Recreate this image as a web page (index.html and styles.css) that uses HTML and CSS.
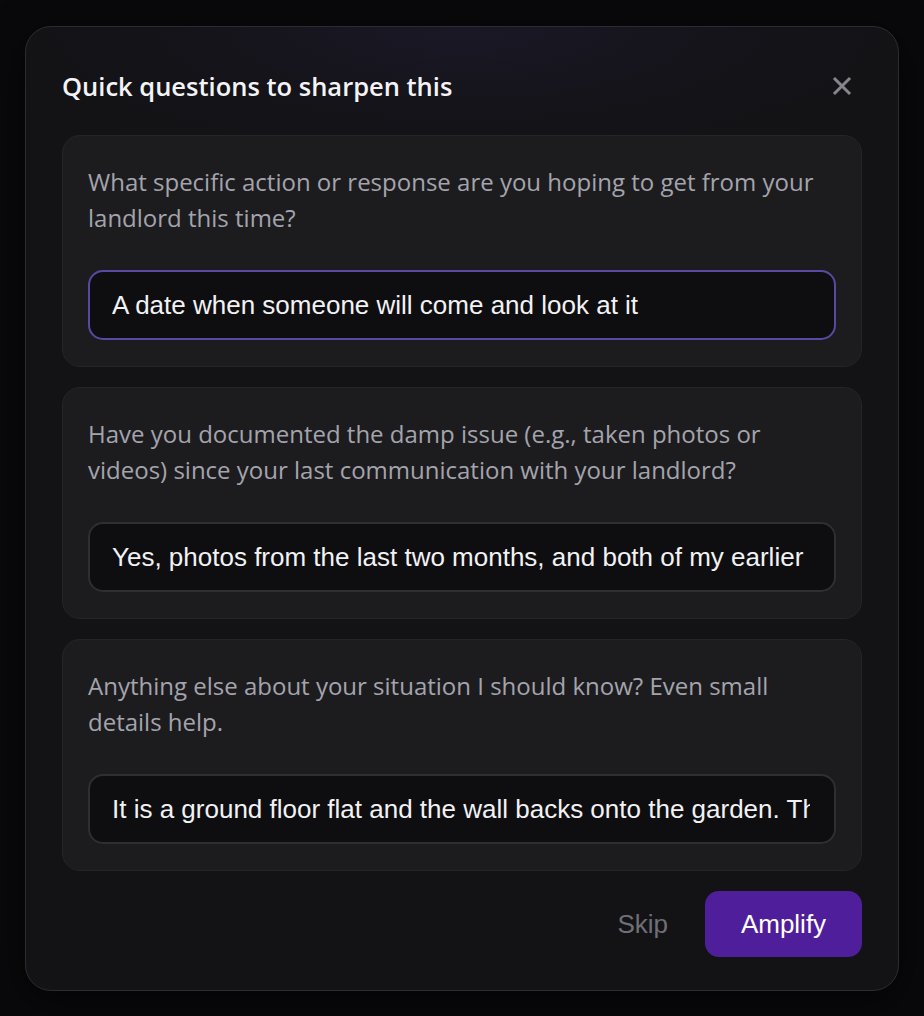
FILE: index.html
```html
<!DOCTYPE html>
<html>
<head>
<meta charset="utf-8">
<link rel="stylesheet" href="styles.css">
</head>
<body>
<div class="modal">
  <div class="header">
    <h2 class="title">Quick questions to sharpen this</h2>
    <button class="close" aria-label="Close">
      <svg width="20" height="20" viewBox="0 0 20 20"><path d="M3 3 L17 17 M17 3 L3 17" stroke="#85858e" stroke-width="3" stroke-linecap="square" fill="none"/></svg>
    </button>
  </div>
  <div class="cards">
    <div class="card">
      <p class="question">What specific action or response are you hoping to get from your landlord this time?</p>
      <div class="input focused"><div class="value">A date when someone will come and look at it</div></div>
    </div>
    <div class="card">
      <p class="question">Have you documented the damp issue (e.g., taken photos or videos) since your last communication with your landlord?</p>
      <div class="input"><div class="value">Yes, photos from the last two months, and both of my earlier emails are saved</div></div>
    </div>
    <div class="card">
      <p class="question">Anything else about your situation I should know? Even small details help.</p>
      <div class="input"><div class="value">It is a ground floor flat and the wall backs onto the garden. There is a gutter above it</div></div>
    </div>
  </div>
  <div class="footer">
    <button class="skip">Skip</button>
    <button class="amplify">Amplify</button>
  </div>
</div>
</body>
</html>
```
FILE: styles.css
```css
html, body {
  margin: 0;
  padding: 0;
  background: #09090b;
  width: 924px;
  height: 1016px;
  overflow: hidden;
}
body {
  padding: 26px 25px 0 25px;
  box-sizing: border-box;
}
.modal {
  width: 874px;
  height: 965px;
  box-sizing: border-box;
  border: 1px solid #2c2c30;
  border-radius: 26px;
  background: radial-gradient(ellipse 520px 160px at 50% 0%, #1a1826 0%, #141318 60%, #131315 100%), #131315;
  padding: 0 36px 0 36px;
  font-family: "Open Sans", "Noto Sans", sans-serif;
  box-shadow: 0 10px 40px rgba(0,0,0,0.6);
}
.header {
  height: 108px;
  display: flex;
  align-items: center;
  justify-content: space-between;
  box-sizing: border-box;
}
.title {
  margin: 0;
  margin-top: 10px;
  font-size: 25.5px;
  font-weight: 600;
  color: #f4f4f6;
}
.close {
  background: none;
  border: none;
  padding: 0;
  margin: 10px 10px 0 0;
  width: 20px;
  height: 20px;
  display: flex;
}
.cards {
  display: flex;
  flex-direction: column;
  gap: 20px;
}
.card {
  background: #1c1c1f;
  border: 1px solid #252528;
  border-radius: 18px;
  padding: 28px 25px 25px 25px;
  height: 232px;
  box-sizing: border-box;
}
.question {
  margin: 0;
  font-size: 24px;
  line-height: 36px;
  color: #a4a4ad;
  height: 72px;
}
.input {
  margin-top: 34px;
  height: 70px;
  box-sizing: border-box;
  border: 2px solid #2e2e33;
  border-radius: 15px;
  background: #0e0e11;
  padding: 0 24px 0 22px;
  display: flex;
  align-items: center;
  font-family: "Liberation Sans", Arial, sans-serif;
  font-size: 26px;
  color: #f2f2f4;
}
.value {
  flex: 1;
  min-width: 0;
  white-space: nowrap;
  overflow: hidden;
}
.input.focused {
  border-color: #5a48a3;
}
.footer {
  display: flex;
  justify-content: flex-end;
  align-items: center;
  gap: 37px;
  margin-top: 20px;
}
.skip {
  background: none;
  border: none;
  font-family: "Liberation Sans", Arial, sans-serif;
  font-size: 26px;
  color: #6f6f77;
  padding: 0;
}
.amplify {
  width: 157px;
  height: 66px;
  border: none;
  border-radius: 14px;
  background: #4f1f9b;
  color: #ffffff;
  font-family: "Liberation Sans", Arial, sans-serif;
  font-size: 26px;
  padding: 0;
}
```
